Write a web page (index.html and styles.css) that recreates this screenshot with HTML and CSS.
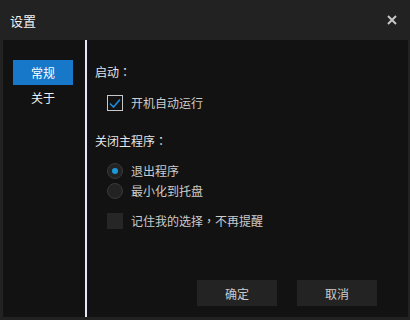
FILE: index.html
```html
<!DOCTYPE html>
<html>
<head>
<meta charset="utf-8">
<link rel="stylesheet" href="styles.css">
</head>
<body>
<div class="window">
  <div class="titlebar">
    <span class="title">设置</span>
    <svg class="close" width="10" height="10" viewBox="0 0 10 10"><path d="M1 1L9 9M9 1L1 9" stroke="#c8c8c8" stroke-width="2" fill="none"/></svg>
  </div>
  <div class="main">
    <div class="sidebar">
      <div class="nav-item active">常规</div>
      <div class="nav-item">关于</div>
    </div>
    <div class="divider"></div>
    <div class="content">
      <div class="section-title first">启动<span class="punct">：</span></div>
      <div class="option row-check">
        <span class="checkbox checked"><svg width="14" height="14" viewBox="0 0 14 14"><path d="M2 7.5L5.5 11L12 3.5" stroke="#1c8ad8" stroke-width="1.6" fill="none"/></svg></span>
        <span>开机自动运行</span>
      </div>
      <div class="section-title second">关闭主程序<span class="punct">：</span></div>
      <div class="option radio-first">
        <span class="radio on"></span>
        <span>退出程序</span>
      </div>
      <div class="option">
        <span class="radio"></span>
        <span>最小化到托盘</span>
      </div>
      <div class="option row-remember">
        <span class="checkbox"></span>
        <span>记住我的选择<span class="punct">，</span>不再提醒</span>
      </div>
      <div class="buttons">
        <button class="btn">确定</button>
        <button class="btn">取消</button>
      </div>
    </div>
  </div>
</div>
</body>
</html>
```
FILE: styles.css
```css
html, body {
  margin: 0;
  padding: 0;
  background: #222222;
}
body {
  width: 410px;
  height: 320px;
  overflow: hidden;
  font-family: "Noto Sans CJK SC", "Noto Sans", sans-serif;
  font-size: 12px;
  color: #cccccc;
}
.window {
  display: flex;
  flex-direction: column;
  height: 320px;
}
.titlebar {
  height: 40px;
  display: flex;
  align-items: center;
  justify-content: space-between;
  padding: 0 13px 0 10px;
  flex-shrink: 0;
}
.title {
  color: #f2f2f2;
  font-size: 13px;
}
.close {
  display: block;
  margin-top: -1px;
}
.main {
  display: flex;
  height: 277px;
  margin: 0 2px 0 3px;
  background: #121212;
}
.sidebar {
  width: 82px;
  padding-top: 20px;
  box-sizing: border-box;
}
.nav-item {
  width: 60px;
  height: 25px;
  margin-left: 10px;
  line-height: 25px;
  text-align: center;
  color: #eeeeee;
}
.nav-item.active {
  background: #1778c9;
  color: #ffffff;
}
.divider {
  width: 2px;
  background: #e6e6f6;
}
.content {
  flex: 1;
  display: flex;
  flex-direction: column;
  padding-left: 8px;
}
.punct {
  font-family: "Noto Sans CJK TC", "Noto Sans CJK SC", sans-serif;
}
.section-title {
  height: 20px;
  line-height: 20px;
  color: #e6e6e6;
}
.section-title.first { margin-top: 22px; }
.section-title.second { margin-top: 18px; }
.option {
  display: flex;
  align-items: center;
  gap: 8px;
  height: 20px;
  padding-left: 12px;
  line-height: 20px;
  color: #cccccc;
}
.row-check { margin-top: 11px; }
.radio-first { margin-top: 10px; }
.row-remember { margin-top: 10px; }
.checkbox {
  width: 16px;
  height: 16px;
  box-sizing: border-box;
  background: #262626;
  display: flex;
  align-items: center;
  justify-content: center;
}
.checkbox.checked {
  background: #121212;
  border: 1px solid #c8c8c8;
}
.radio {
  width: 16px;
  height: 16px;
  box-sizing: border-box;
  border-radius: 50%;
  border: 1px solid #3a3a3a;
  background: #232323;
  display: flex;
  align-items: center;
  justify-content: center;
}
.radio.on::after {
  content: "";
  width: 6px;
  height: 6px;
  border-radius: 50%;
  background: #1a9ad8;
}
.buttons {
  margin-top: auto;
  display: flex;
  justify-content: flex-end;
  gap: 20px;
  padding: 0 31px 11px 0;
}
.btn {
  width: 80px;
  height: 26px;
  border: none;
  background: #232323;
  color: #cccccc;
  font-family: inherit;
  font-size: 12px;
  padding: 0;
}
```
